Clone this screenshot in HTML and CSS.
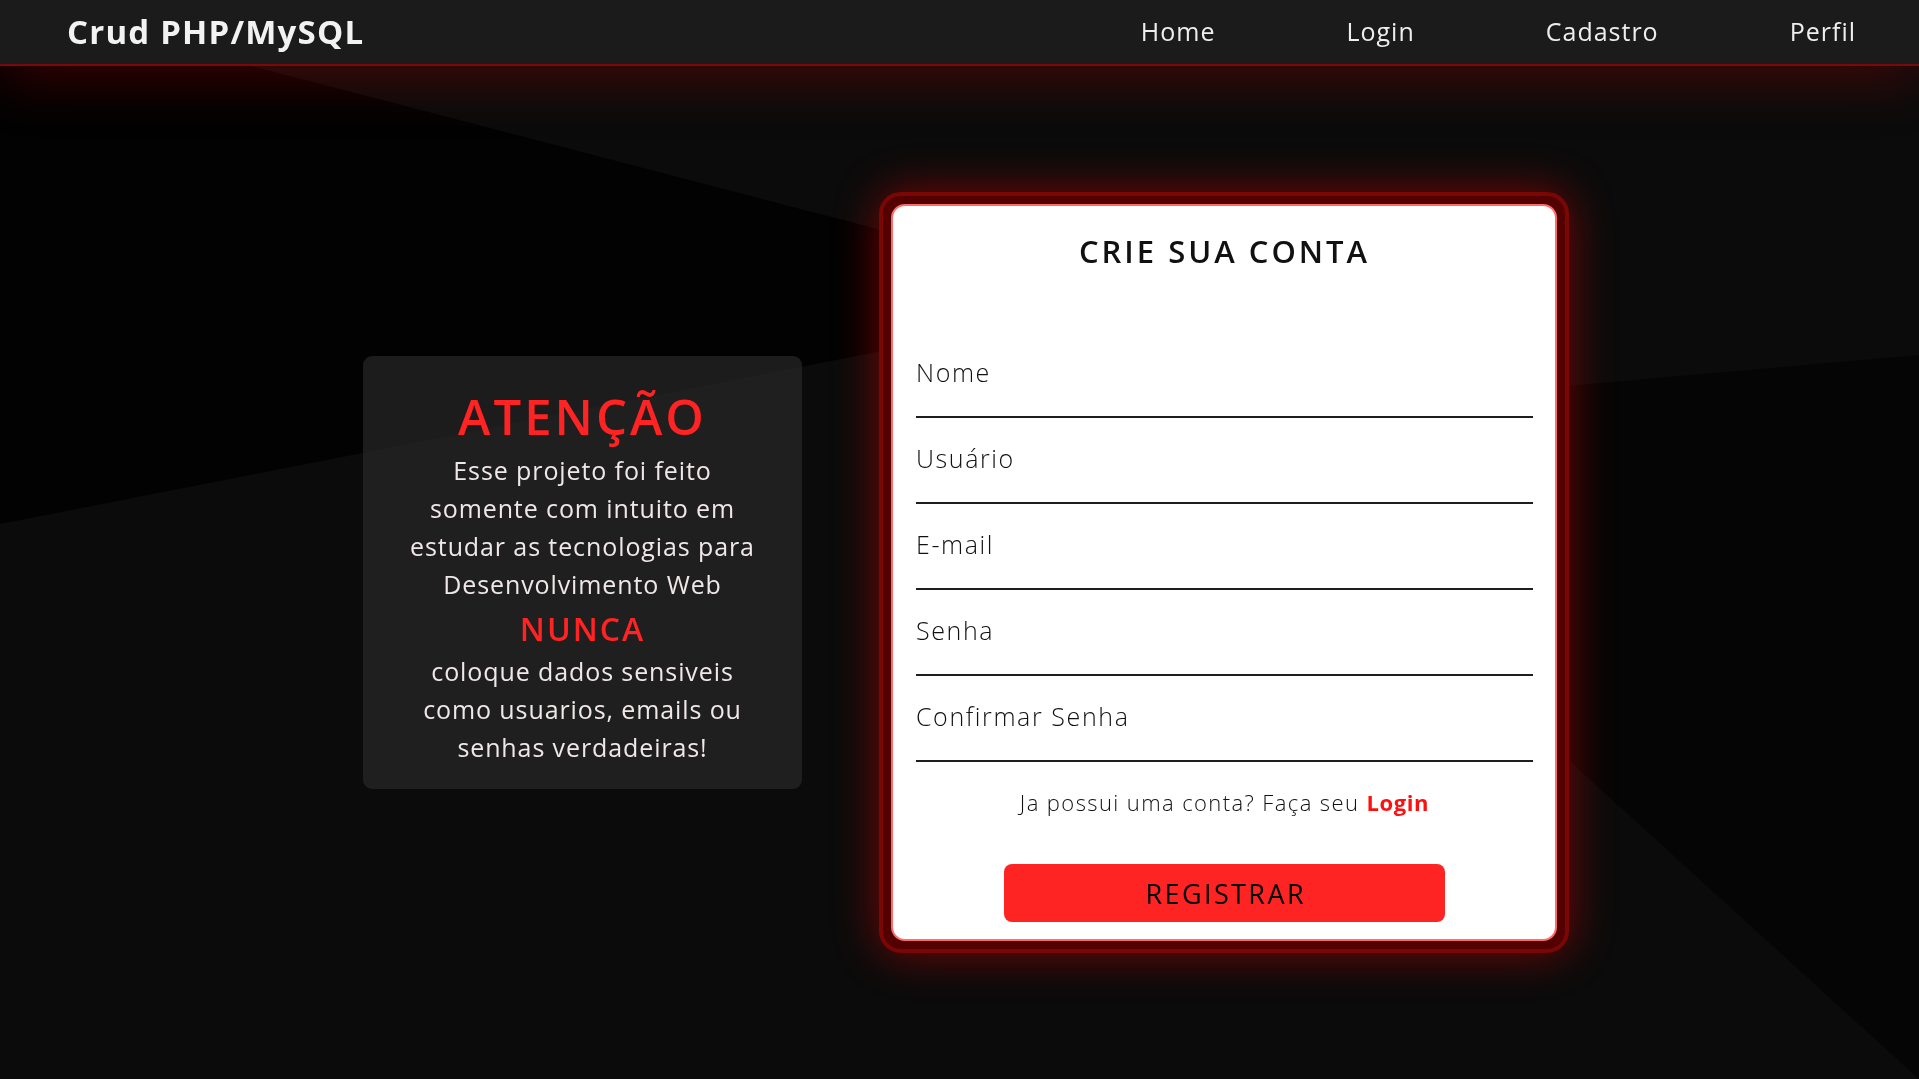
FILE: index.html
```html
<!DOCTYPE html>
<html lang="pt-BR">
<head>
<meta charset="utf-8">
<title>Crud PHP/MySQL - Cadastro</title>
<link rel="stylesheet" href="styles.css">
</head>
<body>
<svg class="backdrop" viewBox="0 0 1919 1079" preserveAspectRatio="none" aria-hidden="true">
  <rect x="0" y="0" width="1919" height="1079" fill="#0b0b0b"/>
  <polygon points="0,66 251,66 1147,299 0,524" fill="#020202"/>
  <polygon points="1194,419 1919,355 1919,1079" fill="#050505"/>
</svg>
<header class="topbar">
  <div class="brand">Crud PHP/MySQL</div>
  <nav class="menu">
    <a href="#" class="menu-link">Home</a>
    <a href="#" class="menu-link">Login</a>
    <a href="#" class="menu-link">Cadastro</a>
    <a href="#" class="menu-link">Perfil</a>
  </nav>
</header>
<main class="stage">
  <section class="notice">
    <h2 class="notice-title">ATENÇÃO</h2>
    <p class="notice-text">Esse projeto foi feito<br>somente com intuito em<br>estudar as tecnologias para<br>Desenvolvimento Web</p>
    <h3 class="notice-warn">NUNCA</h3>
    <p class="notice-text">coloque dados sensiveis<br>como usuarios, emails ou<br>senhas verdadeiras!</p>
  </section>
  <div class="card-frame">
    <form class="card">
      <h1 class="card-title">CRIE SUA CONTA</h1>
      <div class="fields">
        <input class="field" type="text" placeholder="Nome">
        <input class="field" type="text" placeholder="Usuário">
        <input class="field" type="email" placeholder="E-mail">
        <input class="field" type="password" placeholder="Senha">
        <input class="field" type="password" placeholder="Confirmar Senha">
      </div>
      <p class="switch">Ja possui uma conta? Faça seu <a href="#" class="switch-link">Login</a></p>
      <button type="button" class="submit">REGISTRAR</button>
    </form>
  </div>
</main>
</body>
</html>
```

FILE: styles.css
```css
* { box-sizing: border-box; }

html, body {
  margin: 0;
  padding: 0;
}

body {
  min-height: 100vh;
  background: #0b0b0b;
  font-family: "Open Sans", "Liberation Sans", sans-serif;
  color: #eee;
  overflow: hidden;
}

.backdrop {
  position: fixed;
  inset: 0;
  width: 100%;
  height: 100%;
  z-index: -1;
}

.topbar {
  height: 66px;
  background: #1b1b1b;
  border-bottom: 2px solid #7a0a0a;
  display: flex;
  align-items: center;
  justify-content: space-between;
  padding: 0 63px 2px 67px;
  box-shadow: 0 6px 60px rgba(200, 0, 0, 0.35);
  position: relative;
}

.brand {
  font-size: 33px;
  font-weight: 700;
  letter-spacing: 1.2px;
  color: #f2f2f2;
}

.menu {
  display: flex;
  gap: 131px;
}

.menu-link {
  font-size: 25px;
  font-weight: 400;
  letter-spacing: 1px;
  color: #eee;
  text-decoration: none;
}

.stage {
  height: calc(100vh - 66px);
  display: flex;
  align-items: center;
  justify-content: center;
  gap: 77px;
  padding-left: 13px;
}

.notice {
  width: 439px;
  background: rgba(40, 40, 40, 0.7);
  border-radius: 9px;
  text-align: center;
  padding: 30px 0 22px;
}

.notice-title {
  margin: 0;
  font-size: 49px;
  line-height: 60px;
  font-weight: 600;
  letter-spacing: 3px;
  color: #ff2323;
}

.notice-text {
  margin: 6px 0 0;
  font-size: 25px;
  line-height: 37.75px;
  letter-spacing: 0.9px;
  color: #f0e8e8;
}

.notice-warn {
  margin: 3px 0 2px;
  font-size: 32px;
  line-height: 45px;
  font-weight: 600;
  letter-spacing: 2px;
  color: #ff2323;
}

.notice-warn + .notice-text {
  margin-top: 1px;
}

.card-frame {
  width: 690px;
  border: 4px solid #7a0606;
  border-radius: 22px;
  padding: 8px;
  background: #520000;
  box-shadow: 0 0 45px rgba(255, 0, 0, 0.45);
}

.card {
  background: #fff;
  border: 2px solid #ff6b6b;
  border-radius: 14px;
  padding: 25px 22px 17px 23px;
  display: flex;
  flex-direction: column;
  align-items: center;
}

.card-title {
  margin: 0 0 61px;
  font-size: 31px;
  line-height: 40px;
  font-weight: 600;
  letter-spacing: 3px;
  color: #111;
}

.fields {
  width: 100%;
  display: flex;
  flex-direction: column;
}

.field {
  display: block;
  width: 100%;
  height: 86px;
  border: none;
  border-bottom: 2px solid #1e1e1e;
  background: transparent;
  padding: 0 0 5px 0;
  font-family: inherit;
  font-size: 25px;
  font-weight: 300;
  letter-spacing: 1.6px;
  color: #000;
  outline: none;
}

.field::placeholder {
  color: #111;
  opacity: 1;
}

.switch {
  margin: 26px 0 0;
  font-size: 22px;
  line-height: 28px;
  font-weight: 300;
  letter-spacing: 1.4px;
  color: #111;
}

.switch-link {
  color: #ff1010;
  font-weight: 700;
  letter-spacing: 0.6px;
  text-decoration: none;
}

.submit {
  margin-top: 48px;
  width: 441px;
  height: 58px;
  border: none;
  border-radius: 8px;
  background: #ff2424;
  font-family: inherit;
  font-size: 27px;
  font-weight: 500;
  letter-spacing: 2.4px;
  padding: 0 0 0 2.4px;
  color: #000;
  cursor: pointer;
}
```
